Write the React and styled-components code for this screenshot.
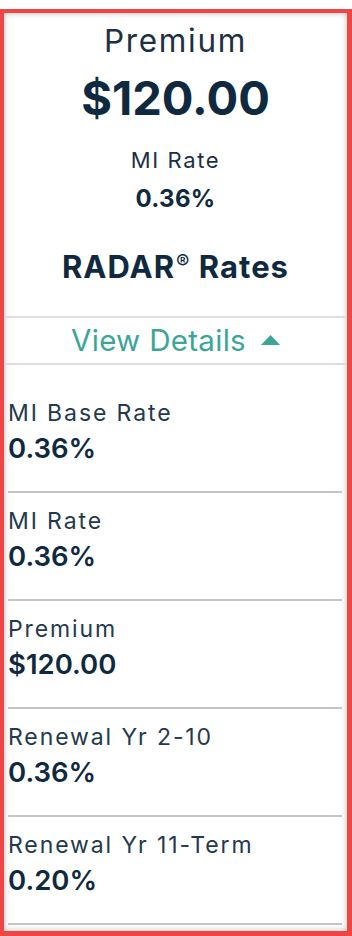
import React from "react";
import styled, { createGlobalStyle } from "styled-components";

const Global = createGlobalStyle`
  html, body { margin: 0; padding: 0; background: #ffffff; }
  body { font-family: Inter, "Liberation Sans", sans-serif; }
  * { box-sizing: border-box; }
`;

const Frame = styled.div`
  margin-top: 9px;
  height: 927px;
  border: 4px solid #ef4545;
  border-right-width: 5px;
  border-bottom-width: 5px;
  box-shadow: inset 0 0 5px 1px rgba(0, 0, 0, 0.22);
  overflow: hidden;
  background: #fff;
`;

const Header = styled.div`
  display: flex;
  flex-direction: column;
  align-items: center;
  padding-top: 10px;
  color: #1c3043;
`;

const Title = styled.div`
  font-size: 31.5px;
  line-height: 36px;
  font-weight: 400;
  letter-spacing: 1.7px;
`;

const BigAmount = styled.div`
  margin-top: 13px;
  font-size: 47px;
  line-height: 52px;
  font-weight: 700;
  color: #0f2a40;
`;

const SubLabel = styled.div`
  margin-top: 22px;
  font-size: 22px;
  line-height: 28px;
  letter-spacing: 1.6px;
`;

const SubValue = styled.div`
  margin-top: 9px;
  font-size: 24px;
  line-height: 32px;
  font-weight: 700;
  color: #0f2a40;
  letter-spacing: 0.3px;
`;

const SectionTitle = styled.div`
  margin-top: 34px;
  margin-bottom: 31px;
  font-size: 31px;
  line-height: 36px;
  font-weight: 700;
  letter-spacing: 1px;
  color: #0f2a40;
  sup {
    font-size: 20px;
    font-weight: 400;
    line-height: 1;
    vertical-align: top;
    position: relative;
    top: 3px;
    margin-left: 1px;
  }
`;

const Toggle = styled.button`
  display: flex;
  align-items: center;
  justify-content: center;
  gap: 15px;
  width: 100%;
  height: 49px;
  padding: 0 0 2px;
  border: none;
  border-top: 2px solid #dedede;
  border-bottom: 2px solid #dedede;
  background: transparent;
  color: #3ba596;
  font-family: inherit;
  font-size: 29.5px;
  font-weight: 400;
  letter-spacing: 0.3px;
  cursor: pointer;
`;

const Details = styled.div`
  padding: 20px 5px 0 4px;
`;

const Row = styled.div`
  padding: 14px 0 26px 0;
  border-bottom: 2px solid #c4c4c4;
`;

const RowLabel = styled.div`
  font-size: 23px;
  line-height: 28px;
  letter-spacing: 1.9px;
  color: #24394d;
`;

const RowValue = styled.div`
  margin-top: 4px;
  font-size: 27.5px;
  line-height: 34px;
  font-weight: 600;
  color: #0f2a40;
`;

const rows = [
  { label: "MI Base Rate", value: "0.36%" },
  { label: "MI Rate", value: "0.36%" },
  { label: "Premium", value: "$120.00" },
  { label: "Renewal Yr 2-10", value: "0.36%" },
  { label: "Renewal Yr 11-Term", value: "0.20%" },
];

export default function App() {
  return (
    <>
      <Global />
      <Frame>
        <Header>
          <Title>Premium</Title>
          <BigAmount>$120.00</BigAmount>
          <SubLabel>MI Rate</SubLabel>
          <SubValue>0.36%</SubValue>
          <SectionTitle>
            RADAR<sup>®</sup> Rates
          </SectionTitle>
        </Header>
        <Toggle>
          View Details
          <svg width="19" height="10" viewBox="0 0 19 10">
            <polygon points="9.5,0 19,10 0,10" fill="#3ba596" />
          </svg>
        </Toggle>
        <Details>
          {rows.map((r) => (
            <Row key={r.label}>
              <RowLabel>{r.label}</RowLabel>
              <RowValue>{r.value}</RowValue>
            </Row>
          ))}
        </Details>
      </Frame>
    </>
  );
}
